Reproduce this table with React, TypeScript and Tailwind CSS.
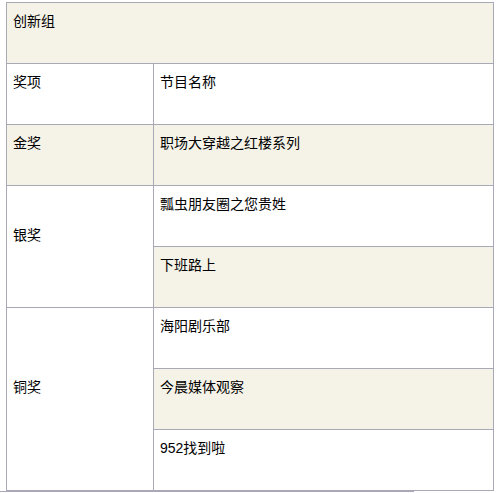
const line = 'border-[#a9a8b6]'

function Cell({
  children,
  className = '',
  middle = false,
}: {
  children: React.ReactNode
  className?: string
  middle?: boolean
}) {
  return (
    <div
      className={`border-r border-b ${line} pl-[6px] flex ${middle ? 'items-center' : 'items-start pt-[8px]'} ${className}`}
    >
      <div className={`leading-[20px] ${middle ? 'pb-[24px]' : 'pb-[20px]'}`}>{children}</div>
    </div>
  )
}

export default function App() {
  return (
    <div
      className="bg-white w-[498px] h-[493px] overflow-hidden text-[14px] text-black"
      style={{ fontFamily: '"Liberation Sans", "Noto Sans CJK SC", sans-serif' }}
    >
      <div className={`ml-[6px] mt-[2px] w-[488px] border-l border-t ${line} grid grid-cols-[147px_1fr] auto-rows-[61px]`}>
        <Cell className="col-span-2 bg-[#f5f3e8]">创新组</Cell>

        <Cell>奖项</Cell>
        <Cell>节目名称</Cell>

        <Cell className="bg-[#f5f3e8]">金奖</Cell>
        <Cell className="bg-[#f5f3e8]">职场大穿越之红楼系列</Cell>

        <Cell middle className="row-span-2">银奖</Cell>
        <Cell>瓢虫朋友圈之您贵姓</Cell>
        <Cell className="bg-[#f5f3e8]">下班路上</Cell>

        <Cell middle className="row-span-3">铜奖</Cell>
        <Cell>海阳剧乐部</Cell>
        <Cell className="bg-[#f5f3e8]">今晨媒体观察</Cell>
        <Cell>952找到啦</Cell>
      </div>
      <div className="w-[414px] h-[1px] bg-[#a9a8b6]" />
    </div>
  )
}
